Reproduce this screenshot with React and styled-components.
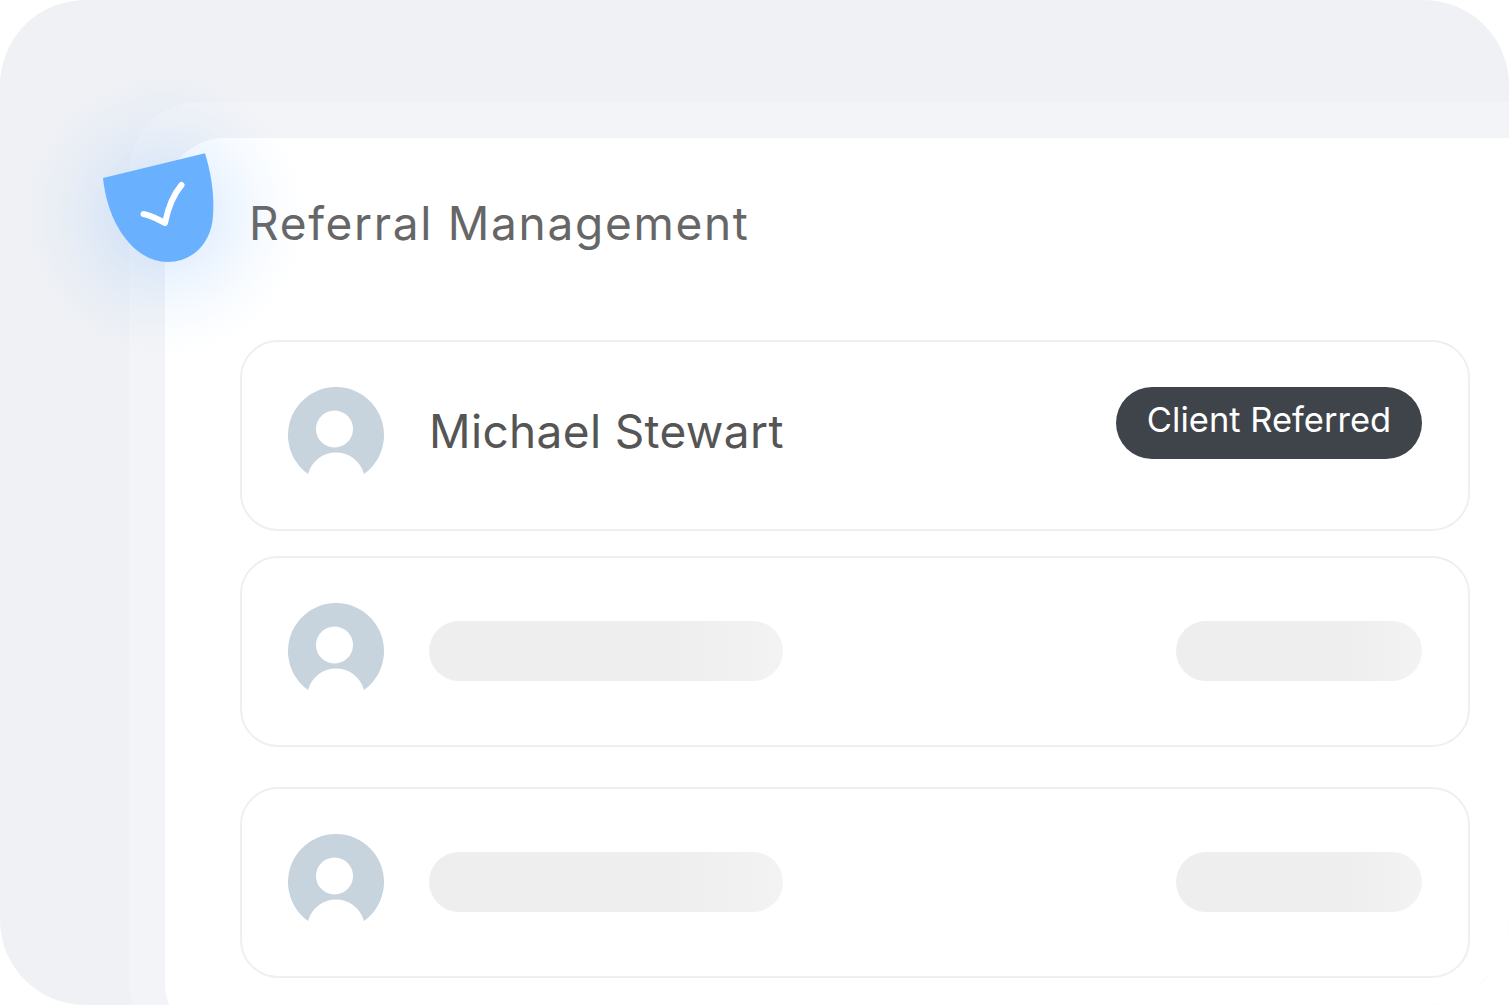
import React from 'react'
import styled, {createGlobalStyle} from 'styled-components'

const GlobalStyle = createGlobalStyle`
    html, body {
        margin: 0;
        padding: 0;
        background: #fff;
        font-family: "Inter", "Liberation Sans", sans-serif;
    }
`;

const OuterPanel = styled.div`
    position: relative;
    width: 1509px;
    height: 1005px;
    box-sizing: border-box;
    padding: 102px 0 0 129px;
    background: #eff1f5;
    border-radius: 85px;
    overflow: hidden;
`;

const MiddlePanel = styled.div`
    height: 941px;
    box-sizing: border-box;
    padding: 36px 0 0 36px;
    background: #f3f4f7;
    border-radius: 70px 0 0 60px;
`;

const Card = styled.div`
    height: 905px;
    box-sizing: border-box;
    padding: 0 39px 0 75px;
    background: #fff;
    border-radius: 60px 0 0 60px;
`;

const Title = styled.h1`
    margin: 0;
    padding: 57px 0 0 9px;
    height: 202px;
    box-sizing: border-box;
    font-size: 46px;
    line-height: 56px;
    font-weight: 400;
    letter-spacing: 1.7px;
    color: #666;
`;

const Row = styled.div`
    display: flex;
    align-items: flex-start;
    height: 191px;
    box-sizing: border-box;
    padding: 45px 46px;
    margin-bottom: ${props => props.$gap}px;
    border: 2px solid #efefef;
    border-radius: 38px;
`;

const AvatarIcon = styled.svg`
    flex: none;
    width: 96px;
    height: 96px;
    margin-right: 45px;
    fill: #c7d3dd;
`;

const Name = styled.div`
    flex: 1;
    font-size: 46px;
    line-height: 56px;
    letter-spacing: 0.35px;
    margin-top: 16px;
    color: #555;
`;

const Status = styled.div`
    width: 306px;
    height: 72px;
    border-radius: 36px;
    background: #3f444b;
    color: #fff;
    font-size: 34.5px;
    line-height: 66px;
    text-align: center;
`;

const Skeleton = styled.div`
    flex: none;
    width: ${props => props.$width}px;
    height: 60px;
    margin: 18px ${props => props.$right}px 0 0;
    border-radius: 30px;
    background: linear-gradient(90deg, #eeeeee 0%, #eeeeee 68%, #f3f3f3 100%);
`;

const Glow = styled.div`
    position: absolute;
    left: 25px;
    top: 75px;
    width: 280px;
    height: 280px;
    background: radial-gradient(circle closest-side, rgba(92, 165, 255, 0.2) 0%, rgba(92, 165, 255, 0.15) 35%, rgba(92, 165, 255, 0.05) 68%, rgba(92, 165, 255, 0) 100%);
    pointer-events: none;
`;

const ShieldIcon = styled.svg`
    position: absolute;
    left: 100px;
    top: 150px;
    width: 116px;
    height: 116px;
`;

const Avatar = () => (
    <AvatarIcon viewBox="0 0 96 96">
        <path
            fillRule="evenodd"
            d="M20 87A48 48 0 1 1 76 87A29 29 0 0 0 20 87ZM46.5 23.5a18.5 18.5 0 1 0 0.01 0Z"
        />
    </AvatarIcon>
);

const Shield = () => (
    <ShieldIcon viewBox="100 150 116 116">
        <path
            d="M103 178L205 153.3C212 176 215 200 212.5 221C209 246 190 262 168 262C135 262 108 226 103 178Z"
            fill="#69b1ff"
        />
        <path
            d="M143.5 214C152 215.5 158 219.5 165 223C168 208 173 195 181.5 185"
            fill="none"
            stroke="#fff"
            strokeWidth="6"
            strokeLinecap="round"
            strokeLinejoin="round"
        />
    </ShieldIcon>
);

const PlaceholderRow = ({gap}) => (
    <Row $gap={gap}>
        <Avatar />
        <Skeleton $width={354} $right={393} />
        <Skeleton $width={246} $right={0} />
    </Row>
);

export default function App() {
    return (
        <>
            <GlobalStyle />
            <OuterPanel>
                <MiddlePanel>
                    <Card>
                        <Title>Referral Management</Title>
                        <Row $gap={25}>
                            <Avatar />
                            <Name>Michael Stewart</Name>
                            <Status>Client Referred</Status>
                        </Row>
                        <PlaceholderRow gap={40} />
                        <PlaceholderRow gap={0} />
                    </Card>
                </MiddlePanel>
                <Glow />
                <Shield />
            </OuterPanel>
        </>
    )
}
